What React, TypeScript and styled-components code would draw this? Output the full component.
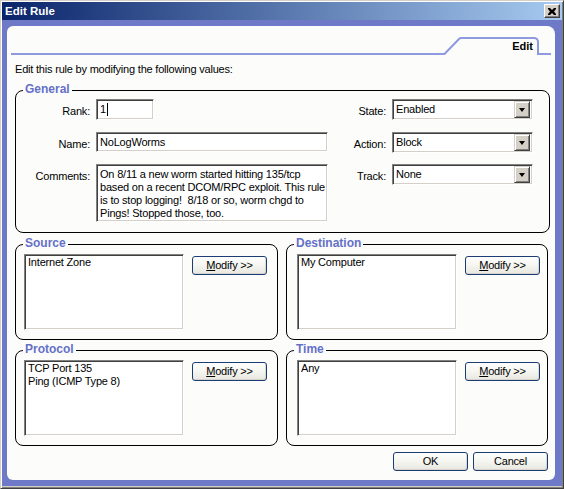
import React from 'react';
import styled, { createGlobalStyle } from 'styled-components';

const GlobalStyle = createGlobalStyle`
  html, body { margin: 0; padding: 0; background: #d4d0c8; }
  body { font-family: "Liberation Sans", Arial, sans-serif; font-size: 11px; letter-spacing: -0.2px; color: #000; }
  * { box-sizing: border-box; }
`;

const PANEL_BG = '#fcfdfb';
const FRAME_BLUE = '#6e79c7';
const TAB_BLUE = '#8e99e0';
const LABEL_BLUE = '#6570c8';

const Window = styled.div`
  width: 564px;
  height: 489px;
  display: flex;
  flex-direction: column;
  background: #d4d0c8;
  border: 1px solid;
  border-color: #d4d0c8 #404040 #404040 #d4d0c8;
  box-shadow: inset 1px 1px #ffffff, inset -1px -1px #808080;
  padding: 1px 1px 2px 1px;
`;

const TitleBar = styled.div`
  height: 18px;
  flex: none;
  display: flex;
  align-items: center;
  padding: 0 2px;
  background: linear-gradient(90deg, #0a246a 0%, #a6caf0 100%);
`;

const Title = styled.span`
  color: #fff;
  font-weight: bold;
  font-size: 11.5px;
  letter-spacing: 0;
  margin-left: 1px;
`;

const CloseButton = styled.div`
  margin-left: auto;
  width: 16px;
  height: 14px;
  background: #d4d0c8;
  border: 1px solid;
  border-color: #ffffff #404040 #404040 #ffffff;
  box-shadow: inset -1px -1px #808080;
  display: flex;
  align-items: center;
  justify-content: center;
`;

const Frame = styled.div`
  flex: 1;
  background: ${FRAME_BLUE};
  padding: 6px 7px 6px 5px;
  display: flex;
`;

const Panel = styled.div`
  flex: 1;
  background: ${PANEL_BG};
  border-radius: 6px 8px 6px 6px;
  display: flex;
  flex-direction: column;
`;

const TabHeader = styled.div`
  height: 29px;
  display: flex;
  align-items: flex-end;
  padding: 0 4px;
`;

const TabLine = styled.div<{ $w?: number }>`
  height: 2px;
  background: ${TAB_BLUE};
  ${(p) => (p.$w ? `width: ${p.$w}px; flex: none;` : 'flex: 1;')}
`;

const TabSlant = styled.svg`
  flex: none;
  display: block;
`;

const Tab = styled.div`
  flex: none;
  width: 78px;
  height: 18px;
  border-top: 2px solid ${TAB_BLUE};
  border-right: 2px solid ${TAB_BLUE};
  border-top-right-radius: 5px;
  text-align: right;
  padding-right: 4px;
  font-weight: bold;
  letter-spacing: 0;
  line-height: 15px;
`;

const Content = styled.div`
  flex: 1;
  display: flex;
  flex-direction: column;
  padding: 0 5px 0 8px;
`;

const Intro = styled.div`
  margin-top: 8px;
  line-height: 13px;
`;

const Group = styled.div<{ $mt?: number }>`
  position: relative;
  border: 1px solid #000;
  border-radius: 8px;
  margin-top: ${(p) => p.$mt ?? 0}px;
`;

const GroupLabel = styled.span`
  position: absolute;
  top: -8px;
  left: 7px;
  padding: 0 2px;
  background: ${PANEL_BG};
  color: ${LABEL_BLUE};
  font-weight: bold;
  font-size: 12px;
  letter-spacing: 0;
  line-height: 13px;
`;

const GeneralGrid = styled.div`
  display: grid;
  grid-template-columns: 74px 232px 52px 141px;
  grid-template-rows: 21px 20px 58px;
  column-gap: 6px;
  row-gap: 12px;
  padding: 8px 14px 10px 0;
`;

const FieldLabel = styled.label`
  align-self: start;
  text-align: right;
  line-height: 20px;
  padding-top: 2px;
`;

const Sunken = styled.div<{ $w?: number; $h?: number }>`
  width: ${(p) => (p.$w ? `${p.$w}px` : '100%')};
  height: ${(p) => (p.$h ? `${p.$h}px` : '100%')};
  background: #fff;
  border: 1px solid;
  border-color: #808080 #ffffff #ffffff #808080;
  box-shadow: inset 1px 1px #404040, inset -1px -1px #d4d0c8;
`;

const TextBox = styled(Sunken)`
  padding: 2px 3px;
  line-height: 15px;
  white-space: pre;
  display: flex;
  align-items: center;
`;

const MultiLine = styled(Sunken)`
  padding: 3px 3px;
  line-height: 13px;
  white-space: pre;
`;

const Caret = styled.span`
  display: inline-block;
  width: 1px;
  height: 13px;
  background: #000;
  margin-left: 1px;
`;

const Select = styled(Sunken)`
  height: 21px;
  display: flex;
  align-items: center;
  padding: 2px 2px 2px 3px;
`;

const SelectText = styled.span`
  flex: 1;
  line-height: 15px;
`;

const DropButton = styled.div`
  width: 16px;
  height: 17px;
  flex: none;
  background: #d4d0c8;
  border: 1px solid;
  border-color: #d4d0c8 #404040 #404040 #d4d0c8;
  box-shadow: inset 1px 1px #ffffff, inset -1px -1px #808080;
  display: flex;
  align-items: center;
  justify-content: center;
`;

const Arrow = styled.div`
  width: 0;
  height: 0;
  border-left: 3.5px solid transparent;
  border-right: 3.5px solid transparent;
  border-top: 4px solid #000;
`;

const GroupGrid = styled.div`
  display: grid;
  grid-template-columns: 263px 262px;
  column-gap: 8px;
  row-gap: 10px;
  margin-top: 11px;
`;

const GroupBody = styled.div<{ $pl?: number }>`
  display: flex;
  align-items: flex-start;
  gap: 8px;
  padding: 9px 10px 9px ${(p) => p.$pl ?? 8}px;
`;

const ListBox = styled(Sunken)`
  flex: none;
  padding: 1px 3px;
  line-height: 13px;
`;

const Button = styled.button`
  width: 75px;
  height: 19px;
  flex: none;
  padding: 0;
  font-family: inherit;
  font-size: 11px;
  letter-spacing: inherit;
  color: #000;
  border: 1px solid #1c3c74;
  border-radius: 3px;
  background: linear-gradient(180deg, #fefefe 0%, #f4f4ef 55%, #e7e6df 100%);
  box-shadow: inset -1px -1px rgba(200, 198, 188, 0.6);
  line-height: 15px;
`;

const ModifyButton = styled(Button)`
  margin-top: 2px;
`;

const ButtonRow = styled.div`
  display: flex;
  justify-content: flex-end;
  gap: 5px;
  margin-top: 6px;
  padding-right: 2px;
`;

const CloseIcon = () => (
  <svg width="8" height="7" viewBox="0 0 8 7">
    <path d="M0 0h2l2 2 2-2h2v1L6 3.5 8 6v1H6L4 5 2 7H0V6l2-2.5L0 1z" fill="#000" />
  </svg>
);

const selectorGroup = (label: string, items: string[], pl?: number) => (
  <Group>
    <GroupLabel>{label}</GroupLabel>
    <GroupBody $pl={pl}>
      <ListBox $w={160} $h={76}>
        {items.map((it) => (
          <div key={it}>{it}</div>
        ))}
      </ListBox>
      <ModifyButton>
        <u>M</u>odify &gt;&gt;
      </ModifyButton>
    </GroupBody>
  </Group>
);

const comments =
  'On 8/11 a new worm started hitting 135/tcp\nbased on a recent DCOM/RPC exploit. This rule\nis to stop logging!  8/18 or so, worm chgd to\nPings! Stopped those, too.';

export default function App() {
  return (
    <>
      <GlobalStyle />
      <Window>
        <TitleBar>
          <Title>Edit Rule</Title>
          <CloseButton>
            <CloseIcon />
          </CloseButton>
        </TitleBar>
        <Frame>
          <Panel>
            <TabHeader>
              <TabLine />
              <TabSlant width="18" height="18" viewBox="0 0 18 18">
                <path d="M0 17 L1.5 17 L16 2 Q17 1 18 1" stroke={TAB_BLUE} strokeWidth="2" fill="none" />
              </TabSlant>
              <Tab>Edit</Tab>
              <TabLine $w={12} />
            </TabHeader>
            <Content>
              <Intro>Edit this rule by modifying the following values:</Intro>
              <Group $mt={14}>
                <GroupLabel>General</GroupLabel>
                <GeneralGrid>
                  <FieldLabel>Rank:</FieldLabel>
                  <TextBox $w={58} $h={21}>
                    1<Caret />
                  </TextBox>
                  <FieldLabel>State:</FieldLabel>
                  <Select>
                    <SelectText>Enabled</SelectText>
                    <DropButton>
                      <Arrow />
                    </DropButton>
                  </Select>

                  <FieldLabel>Name:</FieldLabel>
                  <TextBox $h={20}>NoLogWorms</TextBox>
                  <FieldLabel>Action:</FieldLabel>
                  <Select>
                    <SelectText>Block</SelectText>
                    <DropButton>
                      <Arrow />
                    </DropButton>
                  </Select>

                  <FieldLabel>Comments:</FieldLabel>
                  <MultiLine $h={58}>{comments}</MultiLine>
                  <FieldLabel>Track:</FieldLabel>
                  <Select>
                    <SelectText>None</SelectText>
                    <DropButton>
                      <Arrow />
                    </DropButton>
                  </Select>
                </GeneralGrid>
              </Group>
              <GroupGrid>
                {selectorGroup('Source', ['Internet Zone'])}
                {selectorGroup('Destination', ['My Computer'], 10)}
                {selectorGroup('Protocol', ['TCP Port 135', 'Ping (ICMP Type 8)'])}
                {selectorGroup('Time', ['Any'], 10)}
              </GroupGrid>
              <ButtonRow>
                <Button>OK</Button>
                <Button>Cancel</Button>
              </ButtonRow>
            </Content>
          </Panel>
        </Frame>
      </Window>
    </>
  );
}
